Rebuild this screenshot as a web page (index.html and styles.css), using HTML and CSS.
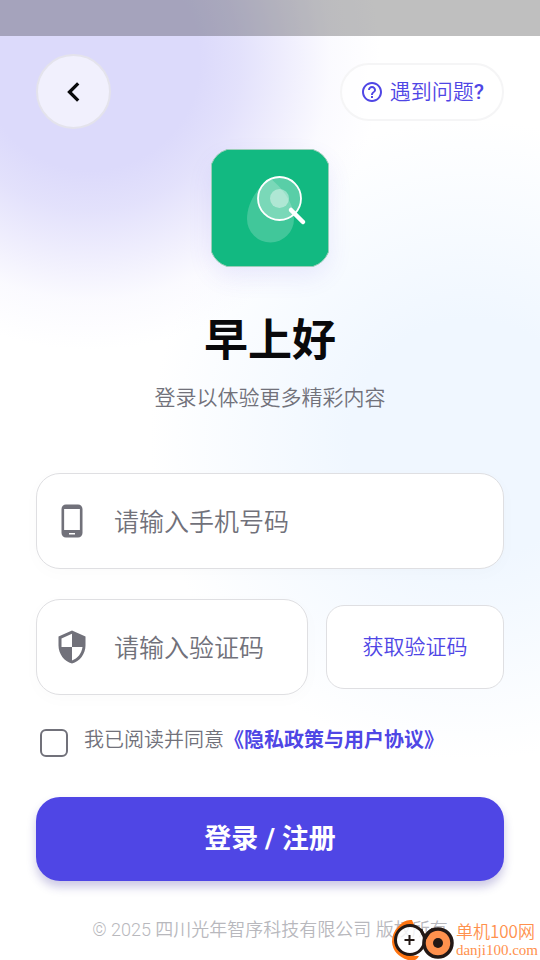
FILE: index.html
```html
<!DOCTYPE html>
<html lang="zh-CN">
<head>
<meta charset="utf-8">
<meta name="viewport" content="width=device-width, initial-scale=1">
<title>登录</title>
<link rel="stylesheet" href="styles.css">
</head>
<body>
<div class="status-bar"></div>
<main class="screen">
  <header class="top">
    <button class="back" type="button" aria-label="返回">
      <svg width="36" height="36" viewBox="0 0 24 24"><path d="M14.800 6.200L9 12l5.800 5.800" fill="none" stroke="#09090b" stroke-width="2.200"/></svg>
    </button>
    <button class="help" type="button">
      <svg width="24" height="24" viewBox="0 0 24 24" fill="currentColor"><path d="M11 18h2v-2h-2v2zm1-16C6.480 2 2 6.480 2 12s4.480 10 10 10 10-4.480 10-10S17.520 2 12 2zm0 18c-4.410 0-8-3.590-8-8s3.590-8 8-8 8 3.590 8 8-3.590 8-8 8zm0-14c-2.210 0-4 1.790-4 4h2c0-1.100.9-2 2-2s2 .9 2 2c0 2-3 1.750-3 5h2c0-2.250 3-2.500 3-5 0-2.210-1.790-4-4-4z"/></svg>
      <span>遇到问题<b>?</b></span>
    </button>
  </header>

  <svg class="logo" width="118" height="118" viewBox="0 0 118 118" aria-hidden="true">
    <path d="M16 0.500H102A25 25 0 0 1 117.500 15V103A25 25 0 0 1 102 117.500H16A25 25 0 0 1 0.500 103V15A25 25 0 0 1 16 0.500Z" fill="#12b981" stroke="#9bceb9" stroke-width="1"/>
    <path d="M59 29C47 38 36 53 36 70A23.500 23.500 0 0 0 83 70C83 53 70 38 59 29Z" fill="#fff" fill-opacity=".2"/>
    <circle cx="68.500" cy="49.500" r="21.500" fill="#fff" fill-opacity=".3" stroke="#fff" stroke-width="1.800"/>
    <circle cx="68.500" cy="49.500" r="9.500" fill="#fff" fill-opacity=".4"/>
    <path d="M80 61L92 73" stroke="#fff" stroke-width="4.500" stroke-linecap="round"/>
  </svg>

  <h1 class="title">早上好</h1>
  <p class="subtitle">登录以体验更多精彩内容</p>

  <form class="form">
    <label class="field">
      <svg width="36" height="36" viewBox="0 0 24 24" fill="currentColor"><path d="M16 1H8C6.340 1 5 2.340 5 4v16c0 1.660 1.340 3 3 3h8c1.660 0 3-1.340 3-3V4c0-1.660-1.340-3-3-3zm-2 20h-4v-1h4v1zm3.250-3H6.750V4h10.500v14z"/></svg>
      <input type="tel" aria-label="手机号码" placeholder="请输入手机号码">
    </label>
    <div class="code-row">
      <label class="field">
        <svg width="36" height="36" viewBox="0 0 24 24" fill="currentColor"><path d="M12 1L3 5v6c0 5.550 3.840 10.740 9 12 5.160-1.260 9-6.450 9-12V5l-9-4zm0 10.990h7c-.53 4.120-3.280 7.790-7 8.940V12H5V6.300l7-3.110v8.800z"/></svg>
        <input type="text" aria-label="验证码" placeholder="请输入验证码">
      </label>
      <button class="get-code" type="button">获取验证码</button>
    </div>
    <div class="agree">
      <input type="checkbox" id="agree">
      <p><label for="agree">我已阅读并同意</label><a href="#">《隐私政策与用户协议》</a></p>
    </div>
    <button class="submit" type="submit">登录 / 注册</button>
  </form>

  <footer class="copyright">© 2025 四川光年智序科技有限公司 版权所有</footer>
</main>

<div class="watermark">
  <svg width="66" height="44" viewBox="0 0 66 44" aria-hidden="true">
    <path d="M8 9Q14 1 22 2L24 7Q12 8 8 17Q4 27 12 34Q18 38 29 38Q26 44 18 42Q3 37 2 24Q2 15 8 9Z" fill="#ff7410"/>
    <circle cx="20" cy="22" r="14.500" fill="#fff" fill-opacity=".8" stroke="#231815" stroke-width="3"/>
    <circle cx="48" cy="25" r="14" fill="#ff914d" stroke="#231815" stroke-width="3.500"/>
    <path d="M31 11Q32 17 36 19Q38 14 43 11" fill="none" stroke="#231815" stroke-width="3"/>
    <circle cx="48" cy="25" r="5" fill="#231815"/>
    <path d="M14.500 22H24.500M19.500 17V27" stroke="#231815" stroke-width="2"/>
  </svg>
  <div class="watermark-text"><span>单机100网</span><small>danji100.com</small></div>
</div>
</body>
</html>
```

FILE: styles.css
```css
* {
  box-sizing: border-box;
}

body {
  margin: 0;
  min-height: 100vh;
  position: relative;
  font-family: Roboto, "Noto Sans CJK SC", sans-serif;
  font-weight: 350;
  color: #71717a;
  background:
    radial-gradient(circle at 90px 60px, #dcdafb 0, #dcdafb 110px, rgba(222, 220, 251, 0.85) 150px, rgba(230, 228, 252, 0.6) 200px, rgba(240, 239, 254, 0.3) 240px, rgba(255, 255, 255, 0) 290px),
    radial-gradient(circle at 470px 440px, #f0f7ff 0, #f0f7ff 120px, rgba(242, 248, 255, 0.7) 200px, rgba(255, 255, 255, 0) 320px),
    #fff;
}

button,
input {
  font: inherit;
  margin: 0;
}

button {
  cursor: pointer;
  padding: 0;
}

svg {
  display: block;
  flex: none;
}

.status-bar {
  height: 36px;
  background: rgba(0, 0, 0, 0.25);
}

.screen {
  display: flex;
  flex-direction: column;
  padding: 18px 36px;
}

.top {
  display: flex;
  justify-content: space-between;
  align-items: center;
}

.back {
  width: 75px;
  height: 75px;
  display: grid;
  place-items: center;
  border: 2px solid #e4e3ec;
  border-radius: 50%;
  background: #f1f0fd;
}

.help {
  display: flex;
  align-items: center;
  gap: 6px;
  height: 58px;
  padding: 0 18px;
  border: 2px solid #f5f5f6;
  border-radius: 29px;
  background: rgba(255, 255, 255, 0.6);
  color: #4f46e5;
  font-size: 21px;
  line-height: 30px;
}

.help b {
  font-weight: 500;
}

.logo {
  align-self: center;
  margin-top: 20px;
  border-radius: 22px;
  overflow: visible;
  box-shadow: 0 10px 24px rgba(79, 70, 229, 0.1);
}

.title {
  margin: 44px 0 0;
  text-align: center;
  font-size: 44px;
  line-height: 60px;
  font-weight: 700;
  color: #09090b;
}

.subtitle {
  margin: 11px 0 0;
  text-align: center;
  font-size: 21px;
  line-height: 32px;
}

.form {
  display: flex;
  flex-direction: column;
  margin-top: 59px;
}

.field {
  flex: 1;
  min-width: 0;
  display: flex;
  align-items: center;
  gap: 24px;
  height: 96px;
  padding: 0 17px;
  border: 1px solid #dfdfe2;
  border-radius: 24px;
  background: #fff;
  box-shadow: 0 4px 18px rgba(0, 0, 0, 0.02);
}

.form > .field {
  flex: none;
}

.field input {
  flex: 1;
  min-width: 0;
  padding: 4px 0 0;
  border: 0;
  outline: 0;
  background: none;
  font-size: 25px;
  line-height: 36px;
  color: #09090b;
}

.field input::placeholder {
  color: #71717a;
  opacity: 1;
}

.code-row {
  display: flex;
  align-items: center;
  gap: 18px;
  margin-top: 30px;
}

.get-code {
  width: 178px;
  height: 84px;
  padding-bottom: 4px;
  border: 1px solid #dfdfe2;
  border-radius: 18px;
  background: #fff;
  color: #4f46e5;
  font-size: 21px;
}

.agree {
  display: flex;
  gap: 16px;
  margin-top: 30px;
  padding-left: 4px;
}

.agree input {
  appearance: none;
  width: 28px;
  height: 28px;
  margin-top: 4px;
  border: 2px solid #71717a;
  border-radius: 6px;
  flex: none;
}

.agree input:checked {
  background: #4f46e5;
}

.agree p {
  margin: 0;
  font-size: 20px;
  line-height: 30px;
}

.agree a {
  color: #4f46e5;
  font-weight: 700;
  text-decoration: none;
}

.submit {
  height: 84px;
  margin-top: 40px;
  padding-bottom: 6px;
  border: 0;
  border-radius: 24px;
  background: #4f46e5;
  box-shadow: 0 6px 10px rgba(50, 40, 150, 0.25);
  color: #fff;
  font-size: 27px;
  font-weight: 700;
}

.copyright {
  margin-top: 35px;
  text-align: center;
  font-size: 18px;
  line-height: 28px;
  color: #b8b8bd;
}

.watermark {
  position: absolute;
  right: 2px;
  bottom: 0;
  display: flex;
  align-items: center;
  color: #ff914d;
}

.watermark-text {
  display: flex;
  flex-direction: column;
  font-family: "Noto Sans CJK SC", sans-serif;
  font-size: 17px;
  line-height: 20px;
}

.watermark-text small {
  font-family: "Liberation Serif", serif;
  font-size: 15px;
  line-height: 18px;
}
```
